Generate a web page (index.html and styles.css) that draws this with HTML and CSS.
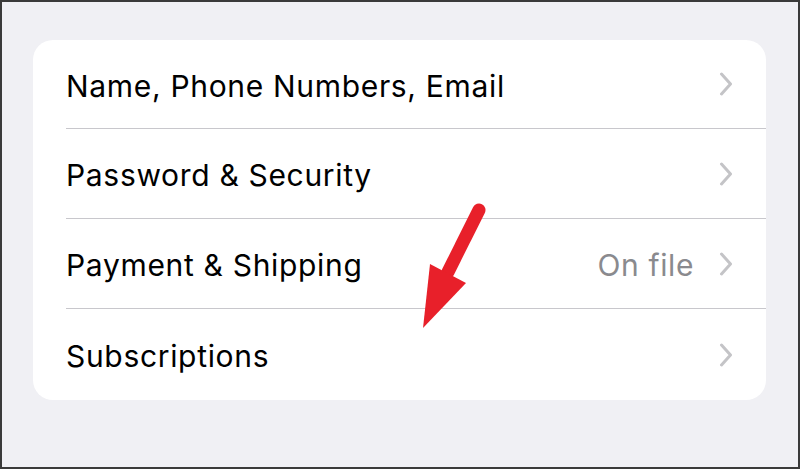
FILE: index.html
```html
<!DOCTYPE html>
<html>
<head>
<meta charset="utf-8">
<link rel="stylesheet" href="styles.css">
</head>
<body>
<div class="screen">
  <div class="card">
    <div class="row">
      <span class="label">Name, Phone Numbers, Email</span>
      <span class="right"><svg class="chev" viewBox="0 0 14 24" width="14" height="24"><path d="M2.5 2 L11.5 12 L2.5 22" fill="none" stroke="#c4c4c7" stroke-width="3" stroke-linecap="round" stroke-linejoin="round"/></svg></span>
    </div>
    <div class="row">
      <span class="label">Password &amp; Security</span>
      <span class="right"><svg class="chev" viewBox="0 0 14 24" width="14" height="24"><path d="M2.5 2 L11.5 12 L2.5 22" fill="none" stroke="#c4c4c7" stroke-width="3" stroke-linecap="round" stroke-linejoin="round"/></svg></span>
    </div>
    <div class="row">
      <span class="label">Payment &amp; Shipping</span>
      <span class="right"><span class="detail">On file</span><svg class="chev" viewBox="0 0 14 24" width="14" height="24"><path d="M2.5 2 L11.5 12 L2.5 22" fill="none" stroke="#c4c4c7" stroke-width="3" stroke-linecap="round" stroke-linejoin="round"/></svg></span>
    </div>
    <div class="row">
      <span class="label">Subscriptions</span>
      <span class="right"><svg class="chev" viewBox="0 0 14 24" width="14" height="24"><path d="M2.5 2 L11.5 12 L2.5 22" fill="none" stroke="#c4c4c7" stroke-width="3" stroke-linecap="round" stroke-linejoin="round"/></svg></span>
    </div>
  </div>
  <svg class="arrow" viewBox="0 0 800 469" width="800" height="469">
    <line x1="479" y1="210" x2="448" y2="272" stroke="#e8202a" stroke-width="13" stroke-linecap="round"/>
    <polygon points="430,264 466,283 423,328" fill="#e8202a"/>
  </svg>
</div>
</body>
</html>
```

FILE: styles.css
```css
html, body {
  margin: 0;
  padding: 0;
}
body {
  width: 800px;
  height: 469px;
  overflow: hidden;
}
.screen {
  position: relative;
  box-sizing: border-box;
  width: 800px;
  height: 469px;
  background: #f0f0f4;
  border: 2px solid #3a3a3a;
  padding: 38px 32px 0 31px;
  font-family: "Inter", "Liberation Sans", Arial, sans-serif;
}
.card {
  background: #ffffff;
  border-radius: 20px;
  height: 360px;
  display: flex;
  flex-direction: column;
}
.row {
  height: 90px;
  display: flex;
  align-items: center;
  justify-content: space-between;
  margin-left: 33px;
  padding-right: 33px;
  padding-top: 3px;
  box-sizing: border-box;
  border-bottom: 1px solid #c8c7cc;
}
.row:first-child {
  height: 89px;
}
.row:last-child {
  border-bottom: none;
  height: 91px;
}
.label {
  font-size: 30px;
  color: #000;
  letter-spacing: 0.68px;
}
.right {
  display: flex;
  align-items: center;
  gap: 25px;
}
.detail {
  font-size: 30px;
  color: #8a8a8e;
  letter-spacing: 0.6px;
}
.chev {
  display: block;
  margin-top: -3px;
}
.arrow {
  position: absolute;
  left: -2px;
  top: -2px;
}
```
